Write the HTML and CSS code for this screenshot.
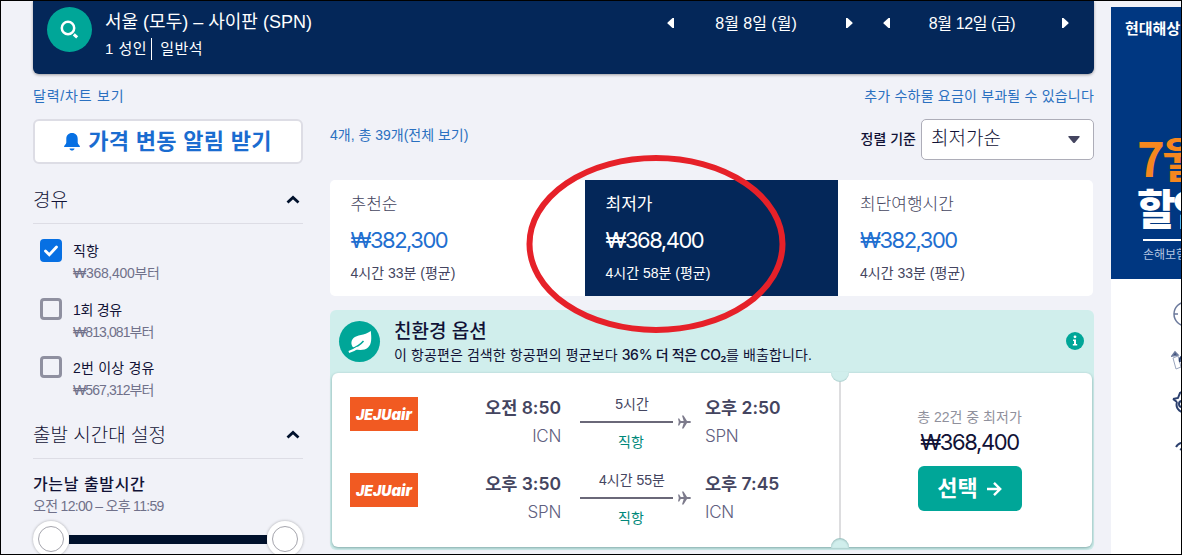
FILE: index.html
```html
<!DOCTYPE html>
<html lang="ko">
<head>
    <meta charset="UTF-8">
    <meta name="viewport" content="width=device-width, initial-scale=1.0">
    <title>서울 - 사이판 항공권</title>
    <link rel="stylesheet" href="styles.css">
</head>
<body>

<div class="page">
    <div class="content">
        <header class="search-bar">
            <div class="search-icon">
                <svg width="20" height="20" viewBox="0 0 20 20" fill="none" stroke="#fff"><circle cx="8" cy="8" r="6.2" stroke-width="2.500"/><path d="M13.800 14.400l3.400 2.900" stroke-width="3"/></svg>
            </div>
            <div class="search-text">
                <div class="route">서울 (모두) – 사이판 (SPN)</div>
                <div class="travellers"><span>1 성인</span><span class="cabin">일반석</span></div>
            </div>
            <div class="date-picker">
                <svg width="7" height="12" viewBox="0 0 7 12"><path d="M7 1v10H5.500L.6 6.600Q0 6 .6 5.400L5.500 1z" fill="#fff"/></svg>
                <span class="date">8월 8일 (월)</span>
                <svg width="7" height="12" viewBox="0 0 7 12"><path d="M0 1v10h1.500L6.400 6.600Q7 6 6.400 5.400L1.500 1z" fill="#fff"/></svg>
            </div>
            <div class="date-picker">
                <svg width="7" height="12" viewBox="0 0 7 12"><path d="M7 1v10H5.500L.6 6.600Q0 6 .6 5.400L5.500 1z" fill="#fff"/></svg>
                <span class="date return">8월 12일 (금)</span>
                <svg width="7" height="12" viewBox="0 0 7 12"><path d="M0 1v10h1.500L6.400 6.600Q7 6 6.400 5.400L1.500 1z" fill="#fff"/></svg>
            </div>
        </header>

        <div class="links">
            <a class="chart-link">달력/차트 보기</a>
            <a class="baggage-link">추가 수하물 요금이 부과될 수 있습니다</a>
        </div>

        <div class="columns">
            <aside class="filters">
                <button class="alert-button">
                    <svg width="16" height="18" viewBox="0 0 16 18"><path d="M8 0c3.600 0 5.700 2.500 5.700 6v3.500c0 1.800 2.300 2.800 2.300 4.500H0c0-1.700 2.300-2.700 2.300-4.500V6C2.300 2.500 4.400 0 8 0zM5.500 15.500h5C10 18.300 6 18.300 5.500 15.500z" fill="#0770e3"/></svg>
                    <span>가격 변동 알림 받기</span>
                </button>

                <h2 class="filter-title"><span>경유</span><svg width="14" height="9" viewBox="0 0 14 9"><path d="M1.500 7.500L7 2.500l5.500 5" fill="none" stroke="#00112c" stroke-width="2.800"/></svg></h2>
                <div class="stops">
                    <div class="stop">
                        <div class="checkbox checked"><svg width="14" height="12" viewBox="0 0 14 12"><path d="M1.500 6l3.800 3.800L12.500 2" fill="none" stroke="#fff" stroke-width="2.800" stroke-linecap="round"/></svg></div>
                        <div><div class="stop-name">직항</div><div class="stop-price">₩368,400부터</div></div>
                    </div>
                    <div class="stop">
                        <div class="checkbox"></div>
                        <div><div class="stop-name tight">1회 경유</div><div class="stop-price tight">₩813,081부터</div></div>
                    </div>
                    <div class="stop">
                        <div class="checkbox"></div>
                        <div><div class="stop-name">2번 이상 경유</div><div class="stop-price tight">₩567,312부터</div></div>
                    </div>
                </div>

                <h2 class="filter-title"><span>출발 시간대 설정</span><svg width="14" height="9" viewBox="0 0 14 9"><path d="M1.500 7.500L7 2.500l5.500 5" fill="none" stroke="#00112c" stroke-width="2.800"/></svg></h2>
                <div class="depart-label">가는날 출발시간</div>
                <div class="depart-range">오전 12:00 – 오후 11:59</div>
                <div class="slider">
                    <div class="handle"></div>
                    <div class="track"></div>
                    <div class="handle"></div>
                </div>
            </aside>

            <main class="results">
                <div class="toolbar">
                    <a class="result-count">4개, 총 39개(전체 보기)</a>
                    <div class="sort">
                        <label class="sort-label">정렬 기준</label>
                        <div class="select"><span>최저가순</span><svg width="12" height="7" viewBox="0 0 12 7"><path d="M1 0h10q1 0 .6 1L7 6.400q-1 1-2 0L.4 1Q0 0 1 0z" fill="#444560"/></svg></div>
                    </div>
                </div>

                <div class="tabs">
                    <div class="tab">
                        <div class="tab-name">추천순</div>
                        <div class="tab-price">₩382,300</div>
                        <div class="tab-time">4시간 33분 (평균)</div>
                    </div>
                    <div class="tab active">
                        <div class="tab-name">최저가</div>
                        <div class="tab-price">₩368,400</div>
                        <div class="tab-time">4시간 58분 (평균)</div>
                        <svg class="marker" width="260" height="180" viewBox="0 0 260 180"><ellipse cx="130" cy="90" rx="126.500" ry="86" fill="none" stroke="#e62129" stroke-width="6"/></svg>
                    </div>
                    <div class="tab">
                        <div class="tab-name">최단여행시간</div>
                        <div class="tab-price">₩382,300</div>
                        <div class="tab-time">4시간 33분 (평균)</div>
                    </div>
                </div>

                <div class="eco">
                    <div class="eco-header">
                        <div class="leaf">
                            <svg width="24" height="24" viewBox="0 0 24 24" fill="none"><path d="M22.800 1C23.500 8 24 14 20 17.500c-3.500 3-9 3-13 1.500C2.500 16 2.500 11 5.500 8 9 4.500 16 6 22.800 1z" fill="#fff"/><path d="M3 18.800C8 17.500 12.500 14.500 15.500 11" stroke="#00a698" stroke-width="1.500"/><path d="M.8 22C4 21 7 19.500 10 17.500" stroke="#fff" stroke-width="2.200"/></svg>
                        </div>
                        <div class="eco-text">
                            <div class="eco-title">친환경 옵션</div>
                            <div class="eco-detail"><span>이 항공편은 검색한 항공편의 평균보다 </span><b>36% 더 적은 CO₂</b><span>를 배출합니다.</span></div>
                        </div>
                        <svg class="info" width="18" height="18" viewBox="0 0 18 18"><circle cx="9" cy="9" r="9" fill="#00a698"/><circle cx="9" cy="4.800" r="1.400" fill="#fff"/><path d="M7 7.500h3V12h1.200v1.500H6.800V12H8V9H7z" fill="#fff"/></svg>
                    </div>

                    <div class="ticket">
                        <div class="legs">
                            <div class="leg">
                                <div class="logo"><span>JEJU</span><span class="air">air</span></div>
                                <div class="from"><div class="time">오전 8:50</div><div class="airport">ICN</div></div>
                                <div class="flight">
                                    <div class="duration">5시간</div>
                                    <div class="line"><i></i><svg width="14" height="14" viewBox="0 0 14 14"><path d="M0 3.500h1.200L2.700 6h3L4 .5h1.500L9 6h3.200q1.800 1 0 2H9l-3.500 5.500H4L5.700 8h-3l-1.500 2.500H0L.8 7z" fill="#7d7b8c"/></svg></div>
                                    <div class="direct">직항</div>
                                </div>
                                <div class="to"><div class="time">오후 2:50</div><div class="airport">SPN</div></div>
                            </div>
                            <div class="leg">
                                <div class="logo"><span>JEJU</span><span class="air">air</span></div>
                                <div class="from"><div class="time">오후 3:50</div><div class="airport">SPN</div></div>
                                <div class="flight">
                                    <div class="duration">4시간 55분</div>
                                    <div class="line"><i></i><svg width="14" height="14" viewBox="0 0 14 14"><path d="M0 3.500h1.200L2.700 6h3L4 .5h1.500L9 6h3.200q1.800 1 0 2H9l-3.500 5.500H4L5.700 8h-3l-1.500 2.500H0L.8 7z" fill="#7d7b8c"/></svg></div>
                                    <div class="direct">직항</div>
                                </div>
                                <div class="to"><div class="time">오후 7:45</div><div class="airport">ICN</div></div>
                            </div>
                        </div>
                        <div class="price-box">
                            <div class="deals">총 22건 중 최저가</div>
                            <div class="price">₩368,400</div>
                            <button class="select-button"><span>선택</span><svg width="16" height="16" viewBox="0 0 16 16"><path d="M1 8h13M8 1.800L14.200 8 8 14.200" fill="none" stroke="#fff" stroke-width="2.400"/></svg></button>
                        </div>
                        <div class="notch top"></div>
                        <div class="notch bottom"></div>
                    </div>
                </div>
            </main>
        </div>
    </div>

    <aside class="ad">
        <div class="ad-banner">
            <div class="ad-brand">현대해상</div>
            <div class="ad-month">7월</div>
            <div class="ad-sale">할인</div>
            <div class="ad-note">손해보험</div>
        </div>
        <div class="ad-icons">
            <svg width="40" height="190" viewBox="0 0 40 190" fill="none" stroke="#6c7a9c" stroke-width="1.500"><circle cx="15" cy="35" r="12"/><path d="M3 35h4M15 35V26"/><path d="M2 79l5-2 3 11-5 2z" stroke="#9aa5bd" stroke-width="1"/><path d="M1 77l3-4 3 3z" fill="#2c406e"/><path d="M9 83q-1-5 3-6" stroke="#2c406e" stroke-width="2"/><g stroke="#2c406e" stroke-width="2"><path d="M2 120l5-1 2-5 3-2M2 120l4 3M6 123q-2 7 5 10"/><circle cx="11" cy="125" r="3"/><path d="M5 168q3-5 8-4"/><path d="M9 170l2 1" /></g></svg>
        </div>
    </aside>
</div>

</body>
</html>
```

FILE: styles.css
```css
* {
    box-sizing: border-box;
}
body {
    margin: 0;
    font-family: "Liberation Sans", "Noto Sans CJK KR", sans-serif;
    color: #111236;
}
div, span, a, label {
    white-space: nowrap;
}
svg {
    display: block;
    flex: none;
}
button {
    font-family: inherit;
    padding: 0;
}
.page {
    display: flex;
    width: 1182px;
    height: 555px;
    border: 1px solid #000;
    background: #f1f2f8;
    overflow: hidden;
}
.content {
    width: 1061px;
    margin-left: 32px;
    flex: none;
}

/* search summary */
.search-bar {
    display: flex;
    height: 73px;
    padding: 6px 25px 0 14px;
    background: #042759;
    border-radius: 0 0 6px 6px;
    box-shadow: 0 1px 3px rgba(37, 32, 31, 0.4);
    color: #fff;
}
.search-icon {
    display: flex;
    align-items: center;
    justify-content: center;
    width: 45px;
    height: 45px;
    border-radius: 50%;
    background: #00a698;
}
.search-text {
    flex: 1;
    padding-left: 13px;
}
.route {
    padding-top: 1px;
    font-size: 18px;
    line-height: 29px;
}
.travellers {
    display: flex;
    margin-top: 1px;
    font-size: 15px;
    letter-spacing: 0.5px;
    line-height: 22px;
}
.cabin {
    margin-left: 4px;
    padding-left: 8px;
    border-left: 1px solid #fff;
}
.date-picker {
    display: flex;
    align-items: center;
    justify-content: space-between;
    width: 186px;
    height: 32px;
    margin-left: 30px;
    font-size: 16px;
}
.date {
    margin: -2px 8px 0 0;
}
.return {
    letter-spacing: -0.4px;
}

.links {
    display: flex;
    justify-content: space-between;
    height: 45px;
    padding-top: 12px;
    font-size: 14px;
    line-height: 21px;
    color: #2a70c0;
}
.chart-link {
    letter-spacing: 0.8px;
}
.baggage-link {
    letter-spacing: 0.2px;
}
.columns {
    display: flex;
}

/* filters */
.filters {
    width: 270px;
    margin-right: 27px;
}
.alert-button {
    display: flex;
    align-items: center;
    justify-content: center;
    gap: 8px;
    width: 100%;
    height: 45px;
    border: 2px solid #dddde5;
    border-radius: 6px;
    background: #fff;
    color: #1a6cd0;
    font-size: 22px;
    font-weight: bold;
    letter-spacing: 0.3px;
}
.alert-button span {
    margin-top: -6px;
}
.filter-title {
    display: flex;
    align-items: center;
    justify-content: space-between;
    height: 60px;
    margin: 0;
    padding: 12px 3px 0 0;
    border-bottom: 1px solid #dddde5;
    font-size: 19px;
    font-weight: 300;
}
.filter-title span {
    margin-top: -2px;
}
.stops {
    height: 175px;
    padding: 15px 0 0 7px;
}
.stop {
    display: flex;
    height: 58.5px;
    gap: 11px;
}
.checkbox {
    display: flex;
    align-items: center;
    justify-content: center;
    width: 22px;
    height: 22px;
    border: 3px solid #8f90a0;
    border-radius: 4px;
}
.checked {
    height: 23px;
    background: #0770e3;
    border-color: #0770e3;
}
.stop-name {
    padding-top: 1px;
    font-size: 14px;
    line-height: 23px;
    letter-spacing: 0.2px;
}
.stop-name.tight {
    letter-spacing: -0.3px;
}
.stop-price {
    font-size: 14px;
    line-height: 20px;
    letter-spacing: -0.3px;
    color: #70718a;
}
.stop-price.tight {
    letter-spacing: -0.9px;
}
.depart-label {
    padding-top: 14px;
    font-size: 16px;
    font-weight: 500;
    line-height: 24px;
    letter-spacing: 0.6px;
}
.depart-range {
    margin-top: -1px;
    font-size: 14px;
    line-height: 20px;
    letter-spacing: -0.7px;
    color: #70718a;
}
.slider {
    display: flex;
    align-items: center;
    margin-top: 5px;
}
.handle {
    display: flex;
    align-items: center;
    justify-content: center;
    width: 36px;
    height: 36px;
    border-radius: 50%;
    background: #fff;
    box-shadow: 0 0 3px rgba(0, 0, 0, 0.3);
}
.handle::after {
    content: "";
    width: 24px;
    height: 24px;
    border: 1px solid #a5a5ad;
    border-radius: 50%;
}
.track {
    flex: 1;
    height: 9px;
    background: #00112c;
}

/* results */
.results {
    width: 764px;
}
.toolbar {
    display: flex;
    justify-content: space-between;
    height: 61px;
}
.result-count {
    font-size: 14px;
    line-height: 32px;
    color: #2a70c0;
}
.sort {
    display: flex;
    gap: 5px;
}
.sort-label {
    font-size: 14px;
    font-weight: 500;
    line-height: 41px;
}
.select {
    display: flex;
    justify-content: space-between;
    align-items: center;
    width: 173px;
    height: 41px;
    padding: 0 13px 0 9px;
    border: 1px solid #adadb8;
    border-radius: 5px;
    background: #fff;
    font-size: 19px;
    font-weight: 300;
}
.select span {
    padding-bottom: 7px;
}
.tabs {
    display: grid;
    grid-template-columns: 255px 253px 255px;
    height: 116px;
}
.tab {
    position: relative;
    padding: 13px 0 0 20.5px;
    background: #fff;
    color: #444560;
}
.tab:first-child {
    border-radius: 5px 0 0 5px;
}
.tab:last-child {
    padding-left: 22px;
    border-radius: 0 5px 5px 0;
}
.tab-name {
    font-size: 17px;
    font-weight: 300;
    line-height: 24px;
}
.tab-price {
    font-family: Inter, "Noto Sans CJK KR", sans-serif;
    font-size: 22px;
    line-height: 46px;
    letter-spacing: -1.5px;
    color: #1f6fd0;
}
.tab-time {
    font-size: 14px;
    line-height: 21px;
}
.active, .active .tab-price {
    background: #042759;
    color: #fff;
}
.active .tab-name {
    font-weight: 400;
}
.marker {
    position: absolute;
    left: -59.5px;
    top: -26px;
    z-index: 2;
}

.eco {
    height: 240px;
    margin-top: 14px;
    padding: 0 2px;
    border-radius: 6px;
    background: #d0eeec;
}
.eco-header {
    display: flex;
    height: 63px;
    padding: 11px 8px 0 7px;
}
.leaf {
    display: flex;
    align-items: center;
    justify-content: center;
    width: 41px;
    height: 41px;
    border-radius: 50%;
    background: #00a698;
}
.eco-text {
    flex: 1;
    padding-left: 14px;
}
.eco-title {
    margin-top: -2px;
    font-size: 19px;
    font-weight: 500;
    line-height: 25px;
}
.eco-detail {
    font-size: 14px;
    line-height: 21px;
}
.eco-detail span {
    white-space: pre;
    letter-spacing: 0.1px;
}
.eco-detail b {
    font-family: Inter, "Noto Sans CJK KR", sans-serif;
    font-weight: 500;
    letter-spacing: -0.3px;
}
.info {
    margin-top: 11px;
}
.ticket {
    position: relative;
    display: flex;
    height: 174px;
    border-radius: 6px;
    background: #fff;
    box-shadow: 0 1px 3px rgba(0, 60, 60, 0.4);
}
.legs {
    width: 509px;
    padding-top: 19px;
    border-right: 2px solid #dddddf;
}
.leg {
    display: flex;
    height: 76px;
    padding-left: 18px;
}
.logo {
    width: 68px;
    height: 34px;
    margin-top: 5px;
    background: #f15a22;
    color: #fff;
    font-family: Inter, sans-serif;
    font-size: 14px;
    font-weight: 900;
    font-style: italic;
    line-height: 36px;
    letter-spacing: 0;
    text-align: center;
}
.air {
    font-size: 15px;
}
.from {
    width: 143px;
    text-align: right;
}
.time {
    font-family: Inter, "Noto Sans CJK KR", sans-serif;
    font-size: 17.5px;
    font-weight: 600;
    line-height: 31px;
    color: #444560;
}
.airport {
    margin-top: -1px;
    font-family: Inter, sans-serif;
    font-size: 17px;
    font-weight: 300;
    line-height: 28px;
    letter-spacing: -0.3px;
    color: #5f6080;
}
.flight {
    width: 112px;
    margin: 0 13px 0 19px;
}
.duration {
    width: 104px;
    font-size: 14px;
    line-height: 24px;
    text-align: center;
    color: #444560;
}
.line {
    display: flex;
    align-items: center;
    gap: 5px;
    height: 12px;
}
.line i {
    width: 93px;
    height: 2px;
    background: #6a6878;
}
.direct {
    width: 102px;
    font-size: 14px;
    line-height: 29px;
    text-align: center;
    color: #00887a;
}
.price-box {
    flex: 1;
    display: flex;
    flex-direction: column;
    align-items: center;
    padding: 33px 0 0 6px;
}
.deals {
    font-size: 14px;
    line-height: 22px;
    color: #8f909c;
}
.price {
    font-family: Inter, "Noto Sans CJK KR", sans-serif;
    font-size: 22px;
    line-height: 28px;
    letter-spacing: -1.4px;
}
.select-button {
    display: flex;
    align-items: center;
    justify-content: center;
    gap: 8px;
    width: 104px;
    height: 45px;
    margin-top: 10px;
    border: none;
    border-radius: 6px;
    background: #00a698;
    color: #fff;
    font-size: 22px;
    font-weight: bold;
}
.select-button span {
    margin-top: -5px;
}
.notch {
    position: absolute;
    left: 499px;
    width: 18px;
    height: 10px;
    background: #d0eeec;
}
.notch.top {
    top: -1px;
    border-radius: 0 0 9px 9px;
    box-shadow: inset 0 -1px 1px rgba(0, 60, 60, 0.15);
}
.notch.bottom {
    bottom: -1px;
    border-radius: 9px 9px 0 0;
    box-shadow: inset 0 1px 2px rgba(0, 60, 60, 0.3);
}

/* ad */
.ad {
    width: 70px;
    margin: 6px 0 0 17px;
    flex: none;
    background: #fff;
    overflow: hidden;
}
.ad-banner {
    height: 272px;
    padding-top: 11px;
    background: #003781;
    color: #fff;
}
.ad-brand {
    padding-left: 14px;
    font-size: 15px;
    font-weight: bold;
    line-height: 22px;
}
.ad-month {
    margin-top: 92px;
    padding-left: 26px;
    font-family: "Noto Sans CJK KR", sans-serif;
    font-size: 47px;
    font-weight: bold;
    line-height: 50px;
    letter-spacing: -3px;
    color: #f5871f;
}
.ad-sale {
    padding-left: 26px;
    font-family: "Noto Sans CJK KR", sans-serif;
    font-size: 42px;
    font-weight: 900;
    line-height: 49px;
    letter-spacing: -3px;
}
.ad-note {
    margin: 8px 0 0 32px;
    border-top: 2px solid #fff;
    font-size: 12px;
    line-height: 28px;
    color: #b5c5e0;
}
.ad-icons {
    padding-left: 60px;
}
```
